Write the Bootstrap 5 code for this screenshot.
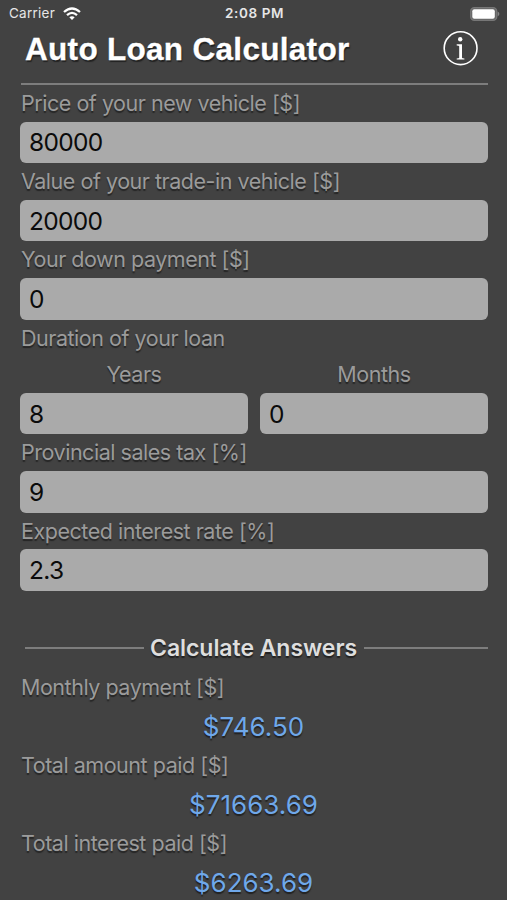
<!DOCTYPE html>
<html lang="en">
<head>
<meta charset="utf-8">
<meta name="viewport" content="width=device-width, initial-scale=1">
<title>Auto Loan Calculator</title>
<link href="https://cdn.jsdelivr.net/npm/bootstrap@5.3.0/dist/css/bootstrap.min.css" rel="stylesheet">
<style>
body{background:#424242;color:#9b9b9b;font-family:Inter,"Liberation Sans",sans-serif;height:900px;overflow:hidden}
.status{height:27px;font-size:13.5px;color:#e6e6e6;padding:0 7px 0 9px;line-height:27px;letter-spacing:.25px}
.status>*{flex:1 1 0}
.clock{font-weight:600;font-size:13.5px;letter-spacing:.6px}
.page{padding:0 19px 0 21px}
.title-bar{height:56px}
.title{font:700 31.5px/44px "Liberation Sans",Arial,sans-serif;color:#fff;letter-spacing:.3px;margin:0 0 0 4px;white-space:nowrap;text-shadow:1px 2px 1px #222;-webkit-text-stroke:.3px #fff}
.rule{height:2px;background:#7d7d7d}
.field-label{display:block;height:36.7px;line-height:37px;font-size:21.5px;letter-spacing:-.47px;text-shadow:0 1.5px 1px #252525;white-space:nowrap}
.field-box.form-control{height:41.5px;padding:0 9px;background:#aaa;border:0;border-radius:6px;color:#0b0b0b;font-size:24.5px;line-height:41px;letter-spacing:-.7px;margin-left:-1px;width:calc(100% + 1px)}
.term{column-gap:13px}
.term .field-label{margin-right:1px}
.answers{height:39.1px;margin-top:38px;padding-left:4px}
.answers h2{font-size:23px;font-weight:600;color:#dedede;margin:0 7px 0 6px;letter-spacing:-.05px;text-shadow:0 1.5px 1px #222;white-space:nowrap}
.lead-rule{width:119px}
.result-label{height:39.1px;line-height:39px}
.result{height:39.1px;line-height:39px;font-size:26px;color:#6fa8ea;letter-spacing:0;text-shadow:0 1.5px 1px #222;margin-right:2px}
</style>
<script src="https://cdn.jsdelivr.net/npm/bootstrap@5.3.0/dist/js/bootstrap.bundle.min.js"></script>
</head>
<body>
<header class="status d-flex align-items-center">
  <div class="d-flex align-items-center"><span>Carrier</span>
    <svg class="ms-2" width="18" height="14" viewBox="0 0 18 14" fill="none" stroke="#fff" stroke-width="2.3"><path d="M1 5Q9-2 17 5M4 8.1Q9 3.7 14 8.1"/><path d="M6.3 10.3Q9 8.2 11.7 10.3L9 13Z" fill="#fff" stroke="none"/></svg>
  </div>
  <div class="clock text-center">2:08 PM</div>
  <div class="d-flex justify-content-end">
    <svg width="31" height="14" viewBox="0 0 31 14"><rect x="1.7" y=".7" width="26" height="12.6" rx="3.6" fill="#666" stroke="#777" stroke-width="1.3"/><rect x="3.3" y="2.3" width="22.5" height="9.4" rx="2" fill="#fff"/><path d="M28.6 4.6Q30.4 5.5 30.4 7T28.6 9.4Z" fill="#858585"/></svg>
  </div>
</header>
<main class="page">
  <div class="title-bar d-flex justify-content-between">
    <h1 class="title">Auto Loan Calculator</h1>
    <svg class="info-icon me-2 mt-1" width="37" height="36" viewBox="0 0 37 36"><circle cx="17.6" cy="17.2" r="16.4" fill="none" stroke="#fff" stroke-width="1.6"/><circle cx="17.2" cy="8.2" r="2.2" fill="#fff"/><path d="M13.7 13.2H19V26.8Q19.2 27.3 21.4 27.4V28.6H13.7V27.4Q16 27.3 16.2 26.8V15.2Q16 14.6 13.7 14.4Z" fill="#fff"/></svg>
  </div>
  <div class="rule"></div>
  <form>
    <label class="field-label" for="price">Price of your new vehicle [$]</label>
    <input class="form-control field-box" id="price" value="80000">
    <label class="field-label" for="trade">Value of your trade-in vehicle [$]</label>
    <input class="form-control field-box" id="trade" value="20000">
    <label class="field-label" for="down">Your down payment [$]</label>
    <input class="form-control field-box" id="down" value="0">
    <div class="field-label">Duration of your loan</div>
    <div class="term d-flex">
      <div class="flex-fill w-50"><label class="field-label text-center" for="years">Years</label><input class="form-control field-box" id="years" value="8"></div>
      <div class="flex-fill w-50"><label class="field-label text-center" for="months">Months</label><input class="form-control field-box" id="months" value="0"></div>
    </div>
    <label class="field-label" for="tax">Provincial sales tax [%]</label>
    <input class="form-control field-box" id="tax" value="9">
    <label class="field-label" for="rate">Expected interest rate [%]</label>
    <input class="form-control field-box" id="rate" value="2.3">
  </form>
  <section>
    <div class="answers d-flex align-items-center"><div class="rule lead-rule"></div><h2>Calculate Answers</h2><div class="rule flex-fill"></div></div>
    <div class="field-label result-label">Monthly payment [$]</div>
    <div class="result text-center">$746.50</div>
    <div class="field-label result-label">Total amount paid [$]</div>
    <div class="result text-center">$71663.69</div>
    <div class="field-label result-label">Total interest paid [$]</div>
    <div class="result text-center">$6263.69</div>
  </section>
</main>
</body>
</html>
